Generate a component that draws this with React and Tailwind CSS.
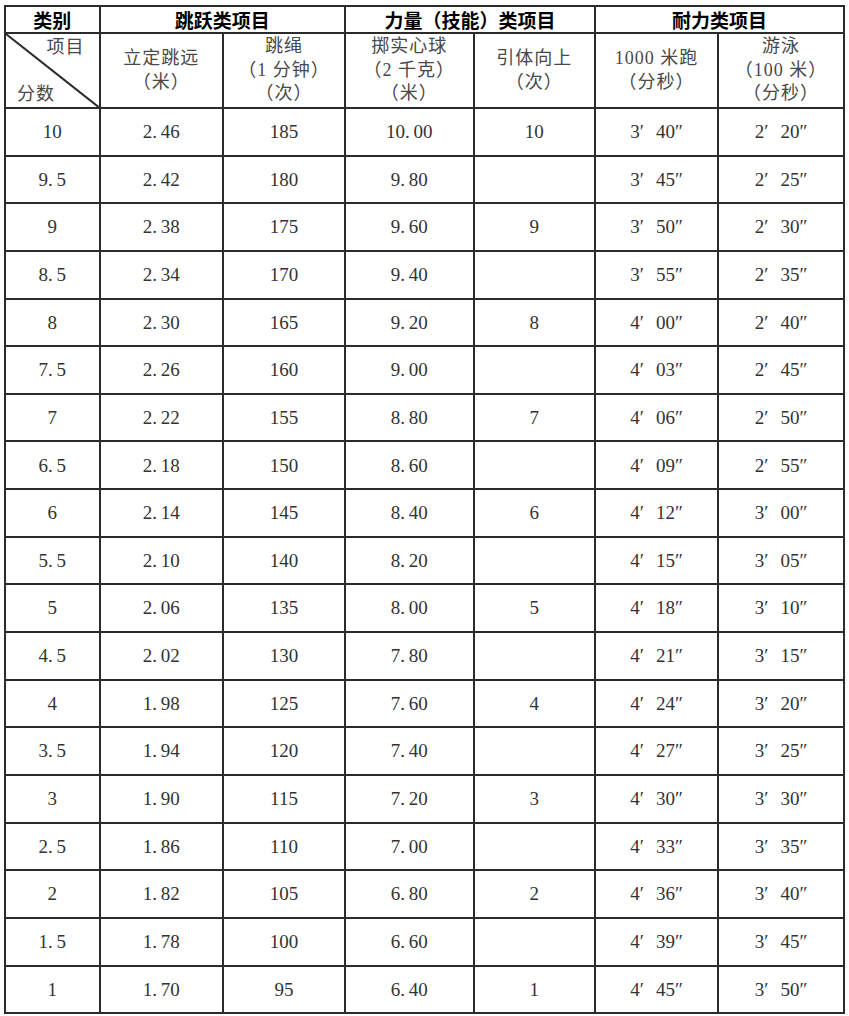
import React from "react";

const rows = [
  ["10", "2.46", "185", "10.00", "10", "3", "40", "2", "20"],
  ["9.5", "2.42", "180", "9.80", "", "3", "45", "2", "25"],
  ["9", "2.38", "175", "9.60", "9", "3", "50", "2", "30"],
  ["8.5", "2.34", "170", "9.40", "", "3", "55", "2", "35"],
  ["8", "2.30", "165", "9.20", "8", "4", "00", "2", "40"],
  ["7.5", "2.26", "160", "9.00", "", "4", "03", "2", "45"],
  ["7", "2.22", "155", "8.80", "7", "4", "06", "2", "50"],
  ["6.5", "2.18", "150", "8.60", "", "4", "09", "2", "55"],
  ["6", "2.14", "145", "8.40", "6", "4", "12", "3", "00"],
  ["5.5", "2.10", "140", "8.20", "", "4", "15", "3", "05"],
  ["5", "2.06", "135", "8.00", "5", "4", "18", "3", "10"],
  ["4.5", "2.02", "130", "7.80", "", "4", "21", "3", "15"],
  ["4", "1.98", "125", "7.60", "4", "4", "24", "3", "20"],
  ["3.5", "1.94", "120", "7.40", "", "4", "27", "3", "25"],
  ["3", "1.90", "115", "7.20", "3", "4", "30", "3", "30"],
  ["2.5", "1.86", "110", "7.00", "", "4", "33", "3", "35"],
  ["2", "1.82", "105", "6.80", "2", "4", "36", "3", "40"],
  ["1.5", "1.78", "100", "6.60", "", "4", "39", "3", "45"],
  ["1", "1.70", "95", "6.40", "1", "4", "45", "3", "50"],
];

// 宋体里小数点占半角，看起来点后有空隙
const dec = (v) => v.replace(".", ".\u2009");

const Time = ({ m, s }) => (
  <span>
    {m}′<span className="pl-[12px]">{s}″</span>
  </span>
);

const cell = "border-2 border-[#2b2b2b] p-0 text-center align-middle";

export default function App() {
  return (
    <div className="min-h-screen bg-white pt-[5px] pl-[4px]">
      <table
        className="table-fixed border-collapse w-[839px] text-[#333] text-[19px] leading-[23.5px]"
        style={{ fontFamily: '"Liberation Serif", "Noto Sans CJK SC", serif' }}
      >
        <colgroup>
          <col className="w-[94.5px]" />
          <col className="w-[123.5px]" />
          <col className="w-[122px]" />
          <col className="w-[128.5px]" />
          <col className="w-[121.5px]" />
          <col className="w-[123px]" />
          <col className="w-[126px]" />
        </colgroup>
        <thead>
          <tr
            className="h-[27px] text-black font-bold text-[19px] leading-[22px]"
            style={{ fontFamily: '"Noto Sans CJK SC", sans-serif' }}
          >
            <th className={cell}>类别</th>
            <th className={cell} colSpan={2}>跳跃类项目</th>
            <th className={cell} colSpan={2}>力量（技能）类项目</th>
            <th className={cell} colSpan={2}>耐力类项目</th>
          </tr>
          <tr className="h-[74px] text-[#484848] text-[18px] tracking-[1px]">
            <th className={`${cell} relative font-normal`}>
              <svg className="absolute inset-0 w-full h-full" viewBox="0 0 100 100" preserveAspectRatio="none">
                <line x1="0" y1="0" x2="100" y2="100" stroke="#2b2b2b" strokeWidth="2" vectorEffect="non-scaling-stroke" />
              </svg>
              <div className="flex flex-col h-[73px] justify-between py-[1px]">
                <div className="text-right pr-[14px] leading-[24px]">项目</div>
                <div className="text-left pl-[11px] leading-[24px]">分数</div>
              </div>
            </th>
            <th className={`${cell} font-normal`}>
              <div>立定跳远</div>
              <div>（米）</div>
            </th>
            <th className={`${cell} font-normal`}>
              <div>跳绳</div>
              <div>（1 分钟）</div>
              <div>（次）</div>
            </th>
            <th className={`${cell} font-normal`}>
              <div>掷实心球</div>
              <div>（2 千克）</div>
              <div>（米）</div>
            </th>
            <th className={`${cell} font-normal`}>
              <div>引体向上</div>
              <div>（次）</div>
            </th>
            <th className={`${cell} font-normal`}>
              <div>1000 米跑</div>
              <div>（分秒）</div>
            </th>
            <th className={`${cell} font-normal`}>
              <div>游泳</div>
              <div>（100 米）</div>
              <div>（分秒）</div>
            </th>
          </tr>
        </thead>
        <tbody>
          {rows.map((r) => (
            <tr key={r[0]} className="h-[47.65px]">
              <td className={cell}>{dec(r[0])}</td>
              <td className={cell}>{dec(r[1])}</td>
              <td className={cell}>{r[2]}</td>
              <td className={cell}>{dec(r[3])}</td>
              <td className={cell}>{r[4]}</td>
              <td className={cell}>
                <Time m={r[5]} s={r[6]} />
              </td>
              <td className={cell}>
                <Time m={r[7]} s={r[8]} />
              </td>
            </tr>
          ))}
        </tbody>
      </table>
    </div>
  );
}
